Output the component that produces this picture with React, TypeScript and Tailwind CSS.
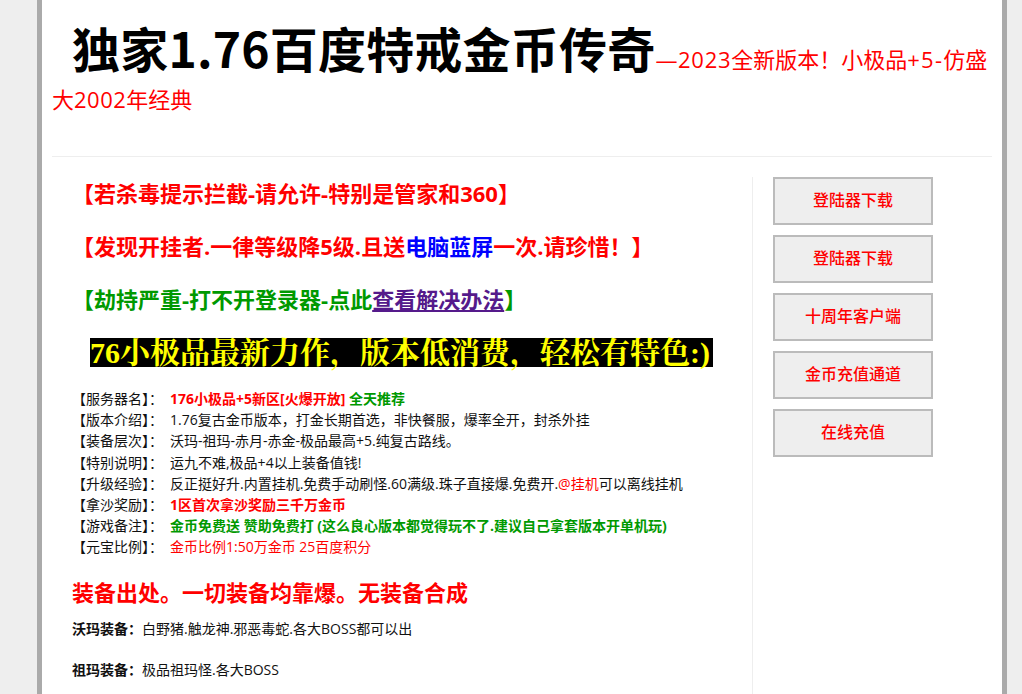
const font = { fontFamily: '"Open Sans", "Noto Sans CJK SC", "Noto Sans", sans-serif' };
const rows: [string, React.ReactNode][] = [
  ["【服务器名】：", <><b className="text-[#ff0000]">176小极品+5新区[火爆开放]</b> <b className="text-[#009900]">全天推荐</b></>],
  ["【版本介绍】：", "1.76复古金币版本，打金长期首选，非快餐服，爆率全开，封杀外挂"],
  ["【装备层次】：", "沃玛-祖玛-赤月-赤金-极品最高+5.纯复古路线。"],
  ["【特别说明】：", "运九不难,极品+4以上装备值钱!"],
  ["【升级经验】：", <>反正挺好升.内置挂机.免费手动刷怪.60满级.珠子直接爆.免费开.<span className="text-[#ff0000]">@挂机</span>可以离线挂机</>],
  ["【拿沙奖励】：", <b className="text-[#ff0000]">1区首次拿沙奖励三千万金币</b>],
  ["【游戏备注】：", <b className="text-[#009900]">金币免费送 赞助免费打 (这么良心版本都觉得玩不了.建议自己拿套版本开单机玩)</b>],
  ["【元宝比例】：", <span className="text-[#ff0000]">金币比例1:50万金币 25百度积分</span>],
];
const buttons = ["登陆器下载", "登陆器下载", "十周年客户端", "金币充值通道", "在线充值"];

export default function App() {
  return (
    <div style={font} className="h-[694px] overflow-hidden bg-[#eeeeee]">
      <div className="ml-[37px] h-full w-[970px] border-x-[5px] border-[#aaaaaa] bg-white px-[10px] text-[#111111]">
        <div className="h-[156px] pt-[16px]">
          <h1 className="text-[22px] leading-[40px] text-[#ff0000]">
            <span style={{ fontFamily: '"Noto Sans CJK SC", sans-serif' }} className="pl-[20px] text-[48px] font-bold leading-[62px] tracking-[0.2px] text-black">独家1.76百度特戒金币传奇</span>
            <span className="tracking-[0.7px]">—2023</span>全新版本！小极品<span className="tracking-[1.3px]">+5-</span>仿盛大<span className="tracking-[0.5px]">2002</span>年经典
          </h1>
        </div>
        <div className="flex h-[538px] border-t border-[#eeeeee] pt-[20px]">
          <div className="w-[701px] border-r border-[#eeeeee] pl-[20px]">
            <div className="flex flex-col gap-[23px] pt-[1px] text-[22px] font-bold leading-[30px]">
              <p className="text-[#ff0000]">【若杀毒提示拦截-请允许-特别是管家和360】</p>
              <p className="text-[#ff0000]">【发现开挂者.一律等级降5级.且送<span className="text-[#0000ff]">电脑蓝屏</span>一次.请珍惜！】</p>
              <p className="text-[#009900]">【劫持严重-打不开登录器-点此<a className="text-[#551a8b] underline">查看解决办法</a>】</p>
            </div>
            <p style={{ fontFamily: '"Liberation Serif", "Noto Serif CJK SC", "Noto Sans CJK SC", serif' }} className="mt-[24px] ml-[18px] w-fit whitespace-nowrap bg-black pr-[3px] text-[30px] leading-[29px] font-bold text-[#ffff00]">
              76小极品最新力作，版本低消费，轻松有特色:)
            </p>
            <div className="mt-[21px] flex flex-col text-[14px] leading-[21.2px]">
              {rows.map(([k, v], i) => (
                <div key={i} className="flex whitespace-pre-wrap">
                  <span className="w-[98px] shrink-0">{k}</span>
                  <span>{v}</span>
                </div>
              ))}
            </div>
            <h2 className="mt-[18px] text-[22px] font-bold leading-[32px] text-[#ff0000]">装备出处。一切装备均靠爆。无装备合成</h2>
            <p className="mt-[10px] text-[14px] leading-[21px]"><b>沃玛装备：</b>白野猪.触龙神.邪恶毒蛇.各大BOSS都可以出</p>
            <p className="mt-[20px] text-[14px] leading-[21px]"><b>祖玛装备：</b>极品祖玛怪.各大BOSS</p>
          </div>
          <div className="flex flex-col gap-[10px] pl-[20px]">
            {buttons.map((b, i) => (
              <a key={i} className="flex h-[48px] w-[160px] items-center justify-center border-2 border-[#bbbbbb] bg-[#eeeeee] pb-[2px] text-[16px] font-medium text-[#ff0000]">{b}</a>
            ))}
          </div>
        </div>
      </div>
    </div>
  );
}
